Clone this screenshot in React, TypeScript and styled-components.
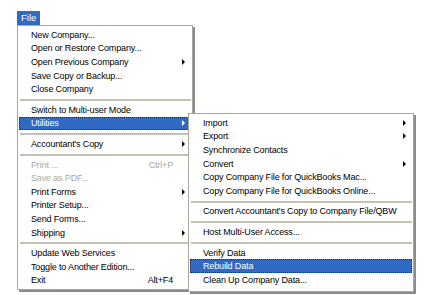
import React from 'react';
import styled, {createGlobalStyle} from 'styled-components';

const Global = createGlobalStyle`
  html, body {
    margin: 0;
    background: #fff;
  }
  body {
    font-family: "Liberation Sans", Arial, sans-serif;
    font-size: 9px;
    color: #000;
  }
`;

const Page = styled.div`
  position: relative;
  width: 426px;
  height: 295px;
  overflow: hidden;
  background: #fff;
`;

const MenuBar = styled.div`
  display: flex;
  padding: 11px 0 0 17px;
`;

const BarItem = styled.div`
  height: 14px;
  padding: 0 4px;
  line-height: 14px;
  font-size: 9.5px;
  background: #316ac5;
  color: #fff;
`;

const Dropdown = styled.div<{$left: number; $top: number; $width: number; $bottom: number}>`
  position: absolute;
  left: ${p => p.$left}px;
  top: ${p => p.$top}px;
  width: ${p => p.$width}px;
  box-sizing: border-box;
  display: flex;
  flex-direction: column;
  padding: 2px 1px ${p => p.$bottom}px;
  background: #fff;
  border: 1px solid #aca899;
  box-shadow: 2px 2px 0 rgba(0, 0, 0, 0.45);
`;

const Item = styled.div<{$active?: boolean; $disabled?: boolean; $indent: number}>`
  position: relative;
  display: flex;
  align-items: center;
  flex: none;
  height: 13.6px;
  padding-left: ${p => p.$indent}px;
  padding-right: 16px;
  white-space: nowrap;
  letter-spacing: -0.15px;
  background: ${p => (p.$active ? '#316ac5' : 'transparent')};
  color: ${p => (p.$active ? '#fff' : p.$disabled ? '#aca899' : '#000')};
  outline: ${p => (p.$active ? '1px dotted #1c2f6b' : 'none')};
  outline-offset: -1px;
`;

const Label = styled.span`
  flex: 1;
`;

const Shortcut = styled.span`
  margin-right: 2px;
`;

const Arrow = styled.span<{$active?: boolean}>`
  position: absolute;
  right: 6px;
  top: 50%;
  margin-top: -3px;
  width: 0;
  height: 0;
  border-top: 3px solid transparent;
  border-bottom: 3px solid transparent;
  border-left: 3px solid ${p => (p.$active ? '#fff' : '#000')};
`;

const Separator = styled.div`
  flex: none;
  height: 2px;
  margin: 3px 0 2px 1px;
  background: #c5c2b2;
`;

type Entry =
  | {sep: true}
  | {label: string; shortcut?: string; sub?: boolean; active?: boolean; disabled?: boolean};

const fileMenu: Entry[] = [
  {label: 'New Company...'},
  {label: 'Open or Restore Company...'},
  {label: 'Open Previous Company', sub: true},
  {label: 'Save Copy or Backup...'},
  {label: 'Close Company'},
  {sep: true},
  {label: 'Switch to Multi-user Mode'},
  {label: 'Utilities', sub: true, active: true},
  {sep: true},
  {label: "Accountant's Copy", sub: true},
  {sep: true},
  {label: 'Print ...', shortcut: 'Ctrl+P', disabled: true},
  {label: 'Save as PDF...', disabled: true},
  {label: 'Print Forms', sub: true},
  {label: 'Printer Setup...'},
  {label: 'Send Forms...'},
  {label: 'Shipping', sub: true},
  {sep: true},
  {label: 'Update Web Services'},
  {label: 'Toggle to Another Edition...'},
  {label: 'Exit', shortcut: 'Alt+F4'},
];

const utilitiesMenu: Entry[] = [
  {label: 'Import', sub: true},
  {label: 'Export', sub: true},
  {label: 'Synchronize Contacts'},
  {label: 'Convert', sub: true},
  {label: 'Copy Company File for QuickBooks Mac...'},
  {label: 'Copy Company File for QuickBooks Online...'},
  {sep: true},
  {label: "Convert Accountant's Copy to Company File/QBW"},
  {sep: true},
  {label: 'Host Multi-User Access...'},
  {sep: true},
  {label: 'Verify Data'},
  {label: 'Rebuild Data', active: true},
  {label: 'Clean Up Company Data...'},
];

const MenuList = ({entries, indent}: {entries: Entry[]; indent: number}) => (
  <>
    {entries.map((e, i) =>
      'sep' in e ? (
        <Separator key={i} />
      ) : (
        <Item key={i} $active={e.active} $disabled={e.disabled} $indent={indent}>
          <Label>{e.label}</Label>
          {e.shortcut && <Shortcut>{e.shortcut}</Shortcut>}
          {e.sub && <Arrow $active={e.active} />}
        </Item>
      )
    )}
  </>
);

export default function App() {
  return (
    <Page>
      <Global />
      <MenuBar>
        <BarItem>File</BarItem>
      </MenuBar>
      <Dropdown $left={17} $top={25} $width={176} $bottom={2}>
        <MenuList entries={fileMenu} indent={12} />
      </Dropdown>
      <Dropdown $left={188} $top={113} $width={226} $bottom={4}>
        <MenuList entries={utilitiesMenu} indent={13} />
      </Dropdown>
    </Page>
  );
}
